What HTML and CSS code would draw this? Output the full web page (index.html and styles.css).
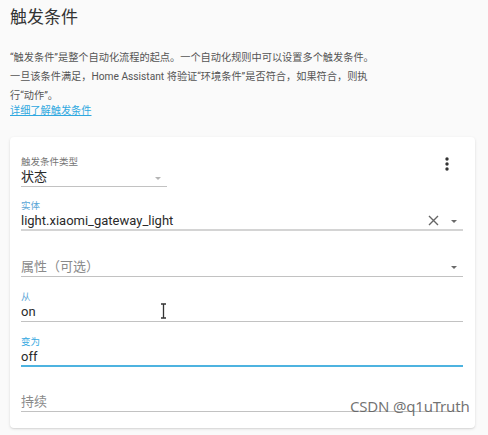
FILE: index.html
```html
<!DOCTYPE html>
<html lang="zh">
<head>
<meta charset="utf-8">
<link rel="stylesheet" href="styles.css">
</head>
<body>
<div class="page">
  <h1 class="title">触发条件</h1>
  <p class="intro">“触发条件”是整个自动化流程的起点。一个自动化规则中可以设置多个触发条件。<br>一旦该条件满足，Home Assistant 将验证“环境条件”是否符合，如果符合，则执<br>行“动作”。</p>
  <a class="more" href="#">详细了解触发条件</a>

  <div class="card">
    <div class="card-head">
      <div class="field field-type">
        <span class="label">触发条件类型</span>
        <div class="value-row">
          <span class="value">状态</span>
          <span class="arrow arrow-light"></span>
        </div>
      </div>
      <div class="kebab">
        <svg width="24" height="24" viewBox="0 0 24 24"><circle cx="12" cy="7" r="1.7" fill="#333"/><circle cx="12" cy="12" r="1.7" fill="#333"/><circle cx="12" cy="17" r="1.7" fill="#333"/></svg>
      </div>
    </div>

    <div class="field field-entity">
      <span class="label label-blue">实体</span>
      <div class="value-row">
        <span class="value">light.xiaomi_gateway_light</span>
        <svg class="clear" width="11" height="11" viewBox="0 0 11 11"><path d="M1 1 L10 10 M10 1 L1 10" stroke="#666" stroke-width="1.4" fill="none"/></svg>
        <span class="arrow"></span>
      </div>
    </div>

    <div class="field field-attr">
      <div class="value-row">
        <span class="placeholder">属性（可选）</span>
        <span class="arrow"></span>
      </div>
    </div>

    <div class="field field-from">
      <span class="label label-blue">从</span>
      <div class="value-row"><span class="value">on</span></div>
    </div>

    <div class="field field-to">
      <span class="label label-active">变为</span>
      <div class="value-row"><span class="value">off</span></div>
    </div>

    <div class="field field-for">
      <div class="value-row"><span class="placeholder">持续</span></div>
    </div>
  </div>

  <svg class="ibeam" width="7" height="16" viewBox="0 0 7 16"><path d="M1 1 H6 M1 15 H6 M3.5 1 V15" stroke="#333" stroke-width="1.3" fill="none"/></svg>
  <div class="watermark">CSDN @q1uTruth</div>
</div>
</body>
</html>
```

FILE: styles.css
```css
html, body {
  margin: 0;
  padding: 0;
  background: #fafafa;
}

body {
  font-family: Roboto, "Noto Sans CJK SC", sans-serif;
  color: #212121;
}

.page {
  position: relative;
  width: 488px;
  height: 435px;
  box-sizing: border-box;
  padding: 5px 13px 0 10px;
  overflow: hidden;
}

.title {
  margin: 0;
  font-size: 17px;
  line-height: 24px;
  font-weight: 400;
  color: #333;
}

.intro {
  margin: 19px 0 0 0;
  font-size: 10.2px;
  line-height: 19px;
  color: #555;
}

.more {
  display: block;
  margin-top: -1px;
  font-size: 10.2px;
  line-height: 14px;
  color: #2fa8e0;
  text-decoration: underline;
  width: max-content;
}

.card {
  margin-top: 19px;
  width: 465px;
  height: 291px;
  box-sizing: border-box;
  background: #fff;
  border-radius: 4px;
  box-shadow: 0 1px 3px rgba(0, 0, 0, 0.12), 0 1px 1px rgba(0, 0, 0, 0.05);
  padding: 5px 12px 16px 11px;
}

.card-head {
  display: flex;
  justify-content: space-between;
  align-items: flex-start;
}

.kebab {
  width: 24px;
  height: 24px;
  margin-top: 10px;
  margin-right: 4px;
}

.kebab svg {
  display: block;
}

.field {
  height: 45px;
  box-sizing: border-box;
  display: flex;
  flex-direction: column;
  justify-content: flex-end;
  padding-bottom: 1px;
  border-bottom: 1px solid #c2c2c2;
}

.field-type {
  width: 146px;
}

.field-entity {
  height: 44px;
  border-bottom: 2px solid #d4d4d4;
  padding-bottom: 0;
}

.field-attr {
  height: 46px;
}

.field-to {
  border-bottom: 2px solid #4db3e0;
  padding-bottom: 0;
}

.label {
  font-size: 9.5px;
  line-height: 12px;
  color: #757575;
}

.label-blue {
  color: #5aa6d6;
}

.label-active {
  color: #36a9e1;
}

.value-row {
  display: flex;
  align-items: center;
  height: 17px;
}

.value {
  flex: 1;
  font-size: 13px;
  line-height: 17px;
  color: #2a2a2a;
}

.placeholder {
  flex: 1;
  font-size: 13px;
  line-height: 17px;
  color: #8a8a8a;
}

.arrow {
  width: 0;
  height: 0;
  border-left: 3.5px solid transparent;
  border-right: 3.5px solid transparent;
  border-top: 3.5px solid #6a6a6a;
  margin-right: 6px;
  margin-top: 1px;
}

.arrow-light {
  border-top-color: #b5b5b5;
  margin-top: 3px;
}

.clear {
  display: block;
  margin-right: 12px;
}

.ibeam {
  position: absolute;
  left: 160px;
  top: 303px;
}

.watermark {
  position: absolute;
  left: 350px;
  top: 397px;
  font-family: "Noto Sans", sans-serif;
  font-size: 15px;
  line-height: 19px;
  color: rgba(90, 90, 90, 0.85);
  letter-spacing: -0.2px;
}
```
